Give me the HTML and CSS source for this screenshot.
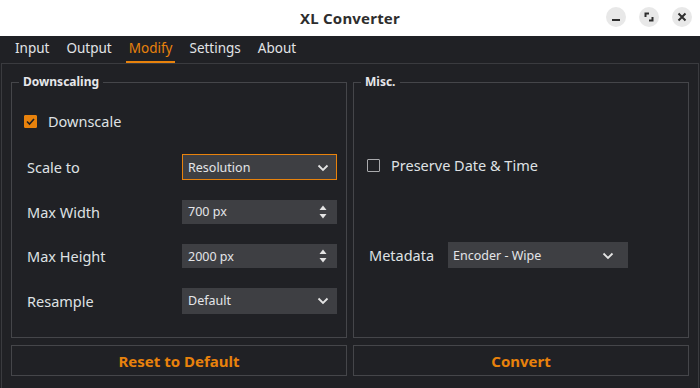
FILE: index.html
```html
<!DOCTYPE html>
<html lang="en">
<head>
    <meta charset="UTF-8">
    <title>XL Converter</title>
    <link rel="stylesheet" href="styles.css">
</head>
<body>
    <header class="titlebar">
        <div class="title">XL Converter</div>
        <div class="win-btns">
            <span class="win-btn">
                <svg width="10" height="10" viewBox="0 0 10 10"><rect x="1" y="7" width="8" height="2" fill="#2e2e2e"/></svg>
            </span>
            <span class="win-btn">
                <svg width="10" height="10" viewBox="0 0 10 10"><path d="M1.5 5V1.5H5" stroke="#2e2e2e" stroke-width="2" fill="none"/><path d="M8.5 5v3.5H5" stroke="#2e2e2e" stroke-width="2" fill="none"/></svg>
            </span>
            <span class="win-btn">
                <svg width="10" height="10" viewBox="0 0 10 10"><path d="M1.5 1.5l7 7M8.5 1.5l-7 7" stroke="#2e2e2e" stroke-width="2"/></svg>
            </span>
        </div>
    </header>

    <nav class="tabs">
        <span class="tab">Input</span>
        <span class="tab">Output</span>
        <span class="tab active">Modify</span>
        <span class="tab">Settings</span>
        <span class="tab">About</span>
    </nav>

    <div class="pane">
        <fieldset class="group">
            <legend>Downscaling</legend>
            <div class="group-body down">
                <label class="check-row">
                    <span class="checkbox checked">
                        <svg width="11" height="11" viewBox="0 0 11 11"><path d="M2 5.5l2.5 2.5L9 3" stroke="#1e1f22" stroke-width="1.6" fill="none"/></svg>
                    </span>
                    <span>Downscale</span>
                </label>
                <div class="field-row">
                    <span class="label">Scale to</span>
                    <div class="combo focused">
                        <span>Resolution</span>
                        <svg class="chev" width="12" height="8" viewBox="0 0 12 8"><path d="M1.5 1.5l4.5 4.5 4.5-4.5" stroke="#e4e4e4" stroke-width="1.8" fill="none"/></svg>
                    </div>
                </div>
                <div class="field-row">
                    <span class="label">Max Width</span>
                    <div class="spin">
                        <span>700 px</span>
                        <svg class="arrows" width="10" height="20" viewBox="0 0 10 20"><path d="M1.5 8L5 3.5 8.5 8z" fill="#e4e4e4"/><path d="M1.5 12L5 16.5 8.5 12z" fill="#e4e4e4"/></svg>
                    </div>
                </div>
                <div class="field-row">
                    <span class="label">Max Height</span>
                    <div class="spin">
                        <span>2000 px</span>
                        <svg class="arrows" width="10" height="20" viewBox="0 0 10 20"><path d="M1.5 8L5 3.5 8.5 8z" fill="#e4e4e4"/><path d="M1.5 12L5 16.5 8.5 12z" fill="#e4e4e4"/></svg>
                    </div>
                </div>
                <div class="field-row">
                    <span class="label">Resample</span>
                    <div class="combo">
                        <span>Default</span>
                        <svg class="chev" width="12" height="8" viewBox="0 0 12 8"><path d="M1.5 1.5l4.5 4.5 4.5-4.5" stroke="#e4e4e4" stroke-width="1.8" fill="none"/></svg>
                    </div>
                </div>
            </div>
        </fieldset>

        <fieldset class="group">
            <legend>Misc.</legend>
            <div class="group-body misc">
                <label class="check-row">
                    <span class="checkbox"></span>
                    <span>Preserve Date &amp; Time</span>
                </label>
                <div class="meta-row">
                    <span class="label">Metadata</span>
                    <div class="combo meta">
                        <span>Encoder - Wipe</span>
                        <svg class="chev" width="12" height="8" viewBox="0 0 12 8"><path d="M1.5 1.5l4.5 4.5 4.5-4.5" stroke="#e4e4e4" stroke-width="1.8" fill="none"/></svg>
                    </div>
                </div>
            </div>
        </fieldset>

        <button class="action">Reset to Default</button>
        <button class="action">Convert</button>
    </div>
</body>
</html>
```

FILE: styles.css
```css
body { margin: 0; background: #202125; font-family: "Noto Sans", "Open Sans", sans-serif; color: #dfe1e4; height: 388px; overflow: hidden; }

.titlebar { height: 36px; background: #fff; display: flex; align-items: center; justify-content: center; position: relative; }
.title { font-size: 15px; font-weight: bold; color: #2e2e2e; letter-spacing: 0.2px; }
.win-btns { position: absolute; right: 8px; top: 7px; display: flex; gap: 13px; }
.win-btn { width: 20px; height: 20px; border-radius: 50%; background: #e8e8e8; display: flex; align-items: center; justify-content: center; }

.tabs { height: 27px; display: flex; align-items: stretch; padding-left: 12px; }
.tab { font-size: 13.5px; padding: 0 3px; margin-right: 11px; line-height: 25px; border-bottom: 2px solid transparent; color: #e2e4e7; }
.tab.active { color: #e8820c; border-bottom-color: #e8820c; }

.pane { margin: 0 1px; height: 303px; border: 1px solid #3a3b3f; padding: 11px 9px 11px 9px; display: grid; grid-template-columns: 336px 336px; grid-template-rows: 263px 31px; column-gap: 6px; row-gap: 7px; }

.group { margin: 0; padding: 0; border: 1px solid #45464a; min-width: 0; }
.group legend { margin-left: 7px; padding: 0 4px; font-size: 12px; line-height: 14px; font-weight: bold; color: #e6e7ea; }

.group-body { display: flex; flex-direction: column; }
.down { padding: 0 9px 0 12px; }
.misc { padding: 0 9px 0 13px; }

.check-row { display: flex; align-items: center; height: 20px; font-size: 14.5px; gap: 11px; }
.down .check-row { margin-top: 22px; }
.misc .check-row { margin-top: 66px; }
.checkbox { width: 11px; height: 11px; border: 1px solid #a9aaad; border-radius: 1px; display: flex; align-items: center; justify-content: center; }
.checkbox.checked { background: #e8820c; border-color: #e8820c; }

.field-row { display: flex; align-items: center; height: 26px; margin-top: 18.5px; padding-left: 3px; }
.down .field-row:nth-child(2) { margin-top: 23px; }
.label { flex: 1; font-size: 14.5px; }

.combo, .spin { width: 155px; box-sizing: border-box; background: #3e3f43; display: flex; align-items: center; justify-content: space-between; font-size: 12.5px; padding: 0 8px 0 6px; color: #e4e5e8; }
.combo { height: 26px; }
.spin { height: 24px; padding-right: 9px; }
.combo.focused { border: 1px solid #e8820c; padding-left: 5px; padding-right: 7px; }
.chev { margin-top: 1px; }

.meta-row { display: flex; align-items: center; height: 26px; margin-top: 67px; padding-left: 2px; }
.meta-row .label { flex: none; width: 79px; }
.combo.meta { width: 180px; padding-left: 5px; padding-right: 14px; }

.action { background: transparent; border: 1px solid #45464a; color: #e8820c; font-family: "Noto Sans", sans-serif; font-weight: bold; font-size: 15px; padding: 0; margin: 0; }
```
